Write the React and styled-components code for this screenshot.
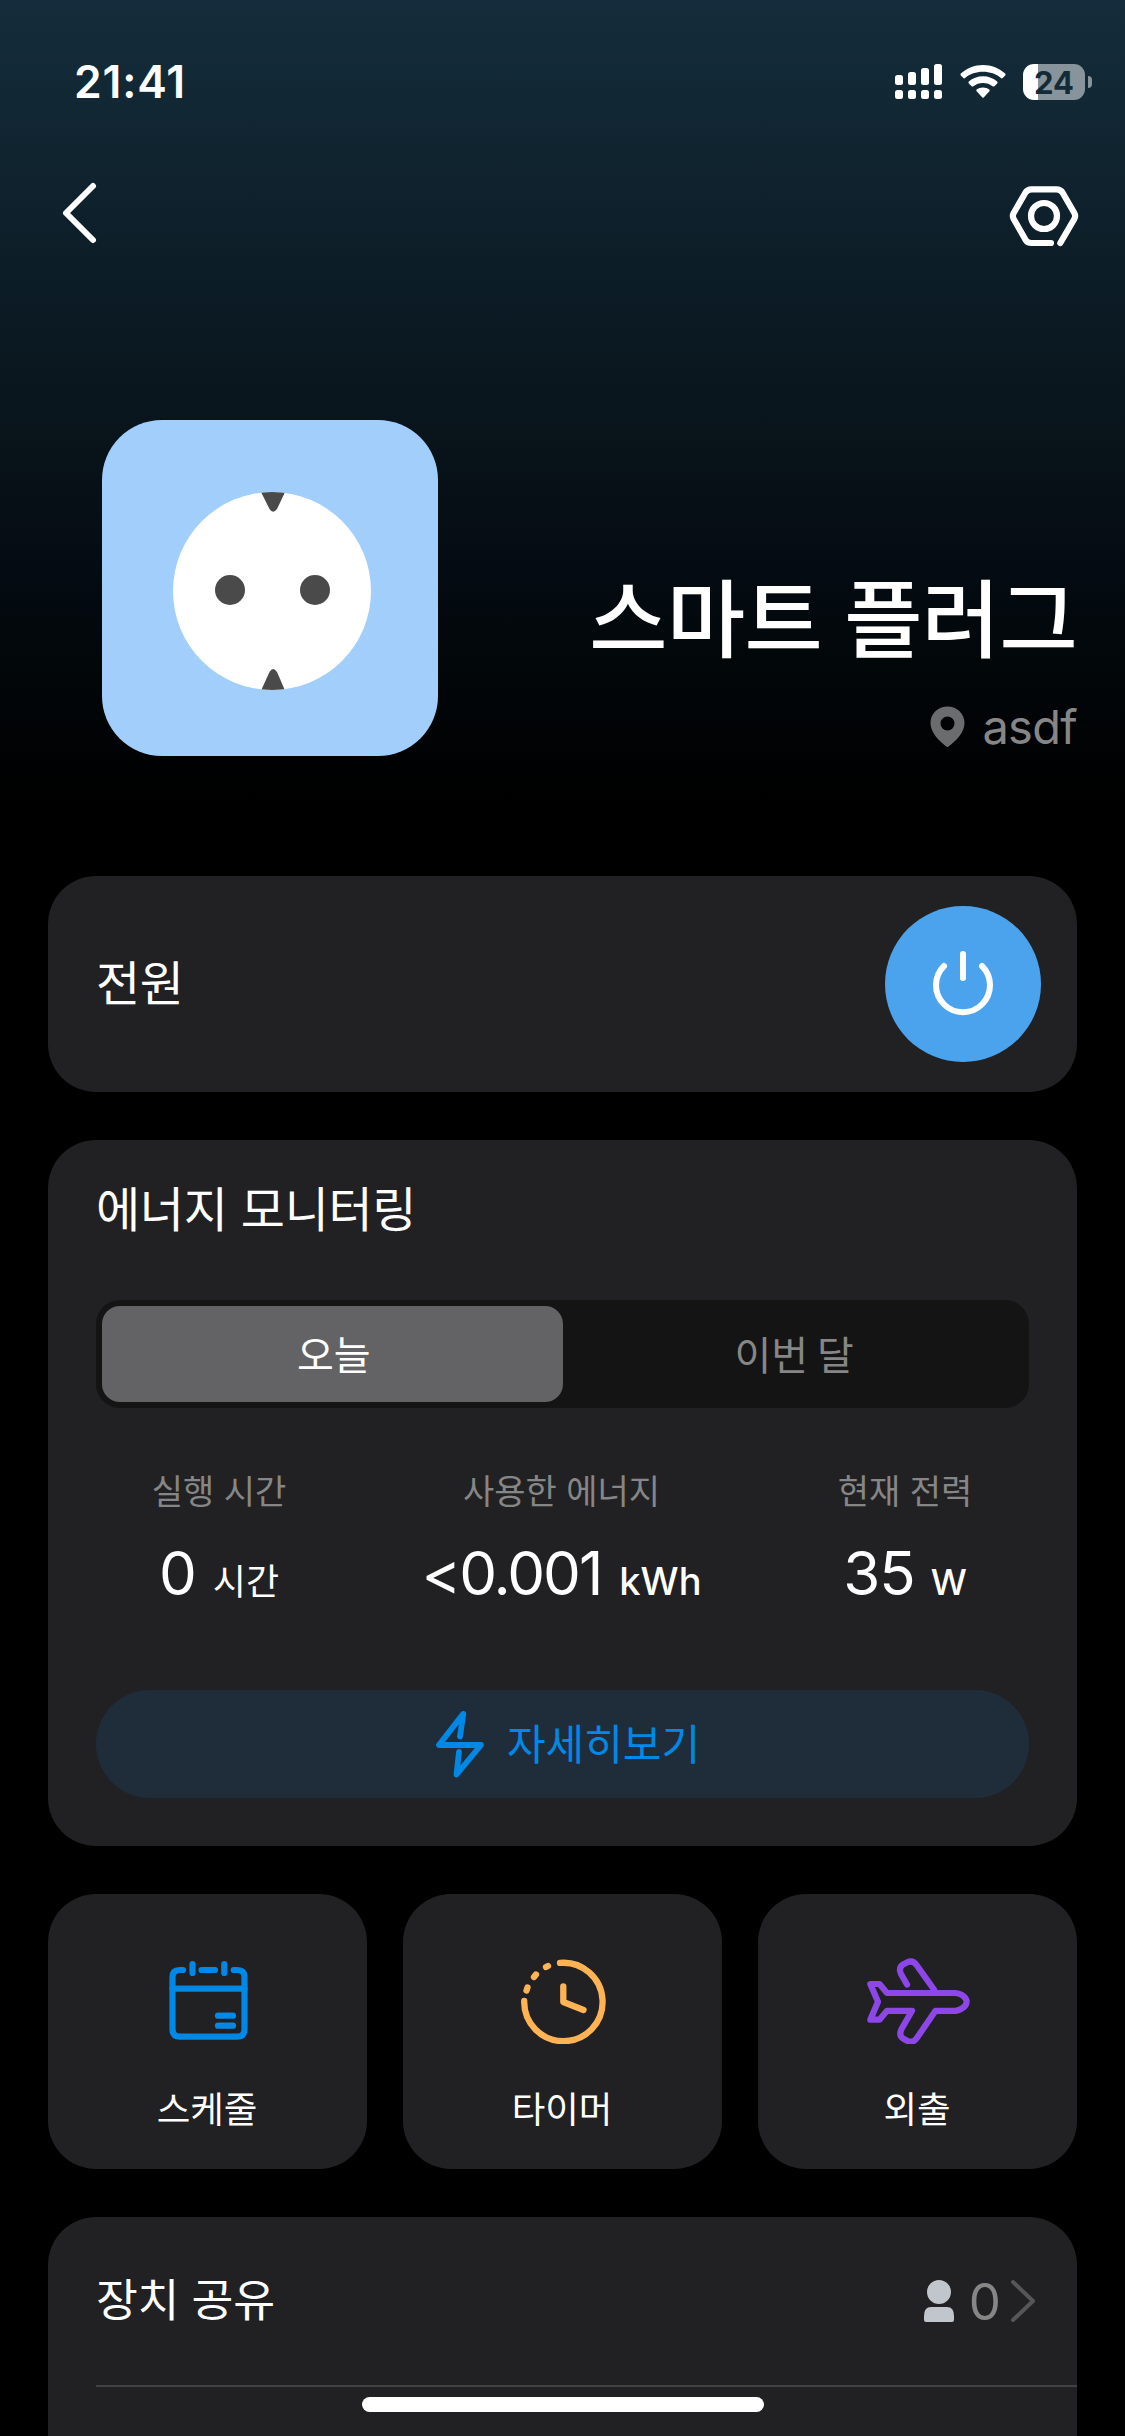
import React from "react";
import styled, { createGlobalStyle } from "styled-components";

const BLUE = "#0088e6";

const GlobalStyle = createGlobalStyle`
  * { box-sizing: border-box; }
  body { margin: 0; background: #000; }
`;

const Screen = styled.div`
  position: relative;
  width: 1125px;
  height: 2436px;
  overflow: hidden;
  color: #fff;
  font-family: Inter, "Noto Sans CJK KR", sans-serif;
  background: linear-gradient(180deg, #152c3c 0px, #112733 110px, #0e202b 220px, #0b1a23 320px, #09141b 430px, #050c14 550px, #02080b 640px, #000 800px);
`;

const StatusBar = styled.header`
  display: flex;
  justify-content: space-between;
  align-items: center;
  height: 164px;
  padding: 0 33px 0 74px;
`;

const Clock = styled.time`
  font-size: 44.5px;
  font-weight: 600;
  line-height: 54px;
  letter-spacing: 0.8px;
`;

const StatusIcons = styled.div`
  display: flex;
  align-items: center;
  gap: 17px;
`;

const Battery = styled.div`
  display: flex;
  align-items: center;
  gap: 3px;
`;

const BatteryBody = styled.div`
  width: 62px;
  height: 36px;
  border-radius: 11px;
  background: linear-gradient(90deg, #fff ${(p) => p.$level}%, #88949b ${(p) => p.$level}%);
  color: #132a37;
  font-size: 31px;
  font-weight: 700;
  line-height: 37px;
  text-align: center;
`;

const BatteryTip = styled.div`
  width: 4px;
  height: 12px;
  border-radius: 0 4px 4px 0;
  background: #88949b;
`;

const NavBar = styled.nav`
  display: flex;
  justify-content: space-between;
  height: 100px;
  padding: 16px 42px 0 60px;
`;

const IconButton = styled.button`
  display: flex;
  align-items: flex-start;
  padding: ${(p) => p.$top || 0}px 0 0;
  border: 0;
  background: none;
  height: 80px;
`;

const Hero = styled.section`
  display: flex;
  justify-content: space-between;
  margin-top: 156px;
  padding: 0 48px 0 102px;
  height: 456px;
`;

const DevicePicture = styled.div`
  width: 336px;
  height: 336px;
  border-radius: 60px;
  background: #a2cefc;
`;

const DeviceInfo = styled.div`
  display: flex;
  flex-direction: column;
  align-items: flex-end;
  padding-top: 138px;
`;

const DeviceName = styled.h1`
  margin: 0;
  font-size: 85px;
  font-weight: 500;
  line-height: 126px;
  letter-spacing: -0.6px;
  white-space: nowrap;
`;

const Place = styled.div`
  display: flex;
  align-items: center;
  gap: 17px;
  height: 60px;
  margin-top: 13px;
  color: #868686;
  font-size: 47px;
  line-height: 60px;
  letter-spacing: -0.7px;
`;

const Cards = styled.main`
  display: flex;
  flex-direction: column;
  gap: 48px;
  padding: 0 48px;
`;

const Card = styled.section`
  height: ${(p) => p.$height}px;
  border-radius: 48px;
  background: #212123;
`;

const PowerCard = styled(Card)`
  display: flex;
  align-items: center;
  justify-content: space-between;
  padding: 0 36px 0 48px;
`;

const CardTitle = styled.h2`
  margin: 0;
  font-size: ${(p) => p.$size || 48}px;
  font-weight: 400;
  line-height: 72px;
  letter-spacing: -0.3px;
`;

const PowerButton = styled.button`
  display: flex;
  padding: 0;
  width: 156px;
  height: 156px;
  border: 0;
  border-radius: 50%;
  background: #4ba3ee;
`;

const EnergyCard = styled(Card)`
  padding: 34px 48px 48px;
`;

const Segmented = styled.div`
  display: flex;
  margin-top: 54px;
  height: 108px;
  padding: 6px;
  border-radius: 24px;
  background: #141414;
`;

const Segment = styled.button`
  flex: 1;
  padding: 0 0 3px 3px;
  border: 0;
  border-radius: 18px;
  background: ${(p) => (p.$active ? "#636365" : "transparent")};
  color: ${(p) => (p.$active ? "#fff" : "#868686")};
  font: 400 40px/92px "Noto Sans CJK KR", sans-serif;
`;

const Stats = styled.div`
  display: grid;
  grid-template-columns: 246px 439px 248px;
  margin-top: 59px;
  text-align: center;
`;

const StatLabel = styled.div`
  color: #868686;
  font-size: 34px;
  line-height: 50px;
  white-space: nowrap;
`;

const StatValue = styled.div`
  display: flex;
  justify-content: center;
  align-items: baseline;
  gap: ${(p) => p.$gap}px;
  margin-top: 11px;
  height: 90px;
  font-size: 60px;
  line-height: 90px;
  letter-spacing: ${(p) => p.$tracking || 0}px;
  white-space: nowrap;
`;

const Unit = styled.span`
  font-size: ${(p) => p.$size}px;
  font-weight: ${(p) => p.$weight};
  letter-spacing: 0;
`;

const DetailButton = styled.button`
  display: flex;
  align-items: center;
  justify-content: center;
  gap: 22px;
  width: 100%;
  height: 108px;
  margin-top: 72px;
  padding: 0 0 0 10px;
  border: 0;
  border-radius: 54px;
  background: #1f2d3b;
  color: ${BLUE};
  font: 400 42px/60px "Noto Sans CJK KR", sans-serif;
`;

const DetailText = styled.span`
  padding-bottom: 5px;
`;

const Tiles = styled.div`
  display: grid;
  grid-template-columns: repeat(3, 1fr);
  gap: 36px;
`;

const Tile = styled(Card)`
  display: flex;
  flex-direction: column;
  align-items: center;
  padding-top: 54px;
`;

const TileLabel = styled.span`
  margin-top: 39px;
  padding-right: 1px;
  font-size: 36.5px;
  line-height: 54px;
`;

const ShareCard = styled(Card)`
  padding-left: 48px;
`;

const ShareRow = styled.div`
  display: flex;
  align-items: center;
  justify-content: space-between;
  height: 170px;
  padding-right: 41px;
  border-bottom: 2px solid #414143;
`;

const ShareCount = styled.div`
  display: flex;
  align-items: center;
  gap: 9px;
`;

const Count = styled.span`
  padding: 2px 0 0 6px;
  color: #868686;
  font-size: 51px;
  line-height: 60px;
`;

const HomeIndicator = styled.div`
  position: absolute;
  left: 362px;
  bottom: 24px;
  width: 402px;
  height: 15px;
  border-radius: 8px;
  background: #fff;
`;

function SignalIcon() {
  const bars = [11, 8, 4, 0];
  return (
    <svg width="48" height="36" viewBox="0 0 48 36" fill="#fff">
      {bars.map((top, i) => (
        <g key={top}>
          <rect x={i * 13} y={top} width="8" height={21 - top} rx="2.5" />
          <rect x={i * 13} y="26" width="8" height="9" rx="2.5" />
        </g>
      ))}
    </svg>
  );
}

function WifiIcon() {
  return (
    <svg width="46" height="34" viewBox="0 0 46 34" fill="#fff">
      <path d="M23 0C14.500 0 6.700 3.300 .8 8.600Q0 9.500 .8 10.400L3.300 13Q4.200 13.800 5.100 13C9.800 8.900 16.100 6.700 23 6.700S36.200 8.900 40.900 13Q41.800 13.800 42.700 13L45.200 10.400Q46 9.500 45.200 8.600C39.300 3.300 31.500 0 23 0Z" />
      <path d="M23 11.300C17.500 11.300 12.600 13.300 8.800 16.600Q8 17.500 8.800 18.400L11.600 21.200Q12.500 22 13.400 21.200C16 19.100 19.300 17.900 23 17.900S30 19.100 32.600 21.200Q33.500 22 34.400 21.200L37.200 18.400Q38 17.500 37.200 16.600C33.400 13.300 28.500 11.300 23 11.300Z" />
      <path d="M23 22.400C20.500 22.400 18.300 23.200 16.600 24.600Q15.900 25.400 16.600 26.200L22.100 32.300Q23 33.300 23.900 32.300L29.400 26.200Q30.100 25.400 29.400 24.600C27.700 23.200 25.500 22.400 23 22.400Z" />
    </svg>
  );
}

function BackIcon() {
  return (
    <svg width="40" height="70" viewBox="0 0 40 70" fill="none" stroke="#fff" strokeWidth="6" strokeLinecap="round" strokeLinejoin="round">
      <path d="M33 6 6 33 33 60" />
    </svg>
  );
}

function SettingsIcon() {
  return (
    <svg width="76" height="76" viewBox="0 0 76 76" fill="none" stroke="#fff" strokeWidth="6.200" strokeLinecap="round" strokeLinejoin="round">
      <path d="M44 61H24.500Q20.500 61 18.500 57.800L6.700 37Q5 34 6.700 31L18.500 10.500Q20.500 7.300 24.500 7.300H49.500Q53.500 7.300 55.500 10.500L67.300 31Q69 34 67.300 37L53.300 61" />
      <circle cx="37" cy="34" r="13" />
    </svg>
  );
}

function SocketDrawing() {
  return (
    <svg width="336" height="336" viewBox="0 0 336 336">
      <defs>
        <clipPath id="face"><circle cx="170" cy="171" r="99" /></clipPath>
      </defs>
      <circle cx="170" cy="171" r="99" fill="#fff" />
      <g fill="#4a4a4a" clipPath="url(#face)">
        <circle cx="128" cy="170" r="15" />
        <circle cx="213" cy="170" r="15" />
        <path d="M157 68 167.500 89Q171 94.500 175 89L185 68Z" />
        <path d="M157 275 167.500 252Q171 246 175 252L185 275Z" />
      </g>
    </svg>
  );
}

function PinIcon() {
  return (
    <svg width="35" height="42" viewBox="0 0 35 42" fill="#6b6c6e">
      <path fillRule="evenodd" d="M17.500 .5C8 .5 .5 7.600 .5 17c0 9.500 8 17.500 17 24.300C26.500 34.500 34.500 26.500 34.500 17 34.500 7.600 27 .5 17.500 .5Zm0 10a7 7 0 1 1 0 14 7 7 0 0 1 0-14Z" />
    </svg>
  );
}

function PowerIcon() {
  return (
    <svg width="156" height="156" viewBox="0 0 156 156" fill="none" stroke="#fff" strokeWidth="6" strokeLinecap="round">
      <path d="M78 48V72M59 60A27 27 0 1 0 97 60" />
    </svg>
  );
}

function BoltIcon() {
  return (
    <svg width="50" height="68" viewBox="0 0 50 68" fill="none" stroke={BLUE} strokeWidth="5.800" strokeLinecap="round" strokeLinejoin="round">
      <path d="M25 26.500 28.300 3.800 4 35H46L21.500 64.500 24 42" />
    </svg>
  );
}

function CalendarIcon() {
  return (
    <svg width="108" height="96" viewBox="0 0 108 96" fill="none" stroke={BLUE} strokeWidth="6.200" strokeLinecap="round" strokeLinejoin="round">
      <path d="M29 22H25.500Q18.500 22 18.500 29V81Q18.500 88.700 25.500 88.700H83.500Q90.500 88.700 90.500 81V29Q90.500 22 83.500 22H79.700M47.500 22H61M38.500 16V25M70.300 16V25" />
      <path d="M18.500 40.700H90.500" />
      <path d="M64 67.700H79M64 77.700H79" />
    </svg>
  );
}

function TimerIcon() {
  return (
    <svg width="108" height="96" viewBox="0 0 108 96" fill="none" stroke="#ffb354" strokeWidth="6.300" strokeLinecap="round" strokeLinejoin="round">
      <path d="M51 14.900A39.200 39.200 0 1 1 15.200 53" />
      <path d="M54.300 38.500V54L74.500 62" />
      <path d="M39 18 37 19M27 26.500 25 29M18.500 39.500 17.500 42.500" />
    </svg>
  );
}

function PlaneIcon() {
  return (
    <svg width="108" height="96" viewBox="0 0 108 96" fill="none" stroke="#8d46e8" strokeWidth="6.200" strokeLinecap="round" strokeLinejoin="round">
      <path d="M43 36.500 37 26Q34 19.500 39 16.500L43.500 14.200Q49 12 52.500 17L70 41.500" />
      <path d="M6.300 36H15.500L23 45H91.500C98 45.500 102.600 50 102.600 53.700C102.600 57.500 98 62.200 91.500 62.800H71.500L52.500 90.500Q49 95.300 43.500 93L39 90.500Q34.500 87.500 37.500 81L48 62.800H23L15.500 71.700H6.300L14 53.700Z" />
    </svg>
  );
}

function PersonIcon() {
  return (
    <svg width="30" height="42" viewBox="0 0 30 42" fill="#c0c6cb">
      <circle cx="15" cy="12" r="12" />
      <path d="M0 36Q0 27 7 27H23Q30 27 30 36V40Q30 42 28 42H2Q0 42 0 40Z" />
    </svg>
  );
}

function ChevronIcon() {
  return (
    <svg width="26" height="44" viewBox="0 0 26 44" fill="none" stroke="#565658" strokeWidth="4" strokeLinecap="round" strokeLinejoin="round">
      <path d="M3 3 23 22 3 41" />
    </svg>
  );
}

const stats = [
  { label: "실행 시간", value: "0", unit: "시간", size: 36, weight: 400, gap: 16 },
  { label: "사용한 에너지", value: "<0.001", unit: "kWh", size: 38, weight: 500, gap: 18, tracking: -2 },
  { label: "현재 전력", value: "35", unit: "W", size: 36, weight: 500, gap: 16, tracking: -1 },
];

const shortcuts = [
  { label: "스케줄", Icon: CalendarIcon },
  { label: "타이머", Icon: TimerIcon },
  { label: "외출", Icon: PlaneIcon },
];

export default function App() {
  return (
    <Screen>
      <GlobalStyle />
      <StatusBar>
        <Clock>21:41</Clock>
        <StatusIcons>
          <SignalIcon />
          <WifiIcon />
          <Battery>
            <BatteryBody $level={24}>24</BatteryBody>
            <BatteryTip />
          </Battery>
        </StatusIcons>
      </StatusBar>
      <NavBar>
        <IconButton><BackIcon /></IconButton>
        <IconButton $top={2}><SettingsIcon /></IconButton>
      </NavBar>
      <Hero>
        <DevicePicture><SocketDrawing /></DevicePicture>
        <DeviceInfo>
          <DeviceName>스마트 플러그</DeviceName>
          <Place><PinIcon />asdf</Place>
        </DeviceInfo>
      </Hero>
      <Cards>
        <PowerCard $height={216}>
          <CardTitle>전원</CardTitle>
          <PowerButton><PowerIcon /></PowerButton>
        </PowerCard>
        <EnergyCard $height={706}>
          <CardTitle>에너지 모니터링</CardTitle>
          <Segmented>
            <Segment $active>오늘</Segment>
            <Segment>이번 달</Segment>
          </Segmented>
          <Stats>
            {stats.map((s) => (
              <div key={s.label}>
                <StatLabel>{s.label}</StatLabel>
                <StatValue $gap={s.gap} $tracking={s.tracking}>
                  {s.value}
                  <Unit $size={s.size} $weight={s.weight}>{s.unit}</Unit>
                </StatValue>
              </div>
            ))}
          </Stats>
          <DetailButton><BoltIcon /><DetailText>자세히보기</DetailText></DetailButton>
        </EnergyCard>
        <Tiles>
          {shortcuts.map(({ label, Icon }) => (
            <Tile key={label} $height={275}>
              <Icon />
              <TileLabel>{label}</TileLabel>
            </Tile>
          ))}
        </Tiles>
        <ShareCard $height={300}>
          <ShareRow>
            <CardTitle $size={45.5}>장치 공유</CardTitle>
            <ShareCount><PersonIcon /><Count>0</Count><ChevronIcon /></ShareCount>
          </ShareRow>
        </ShareCard>
      </Cards>
      <HomeIndicator />
    </Screen>
  );
}
